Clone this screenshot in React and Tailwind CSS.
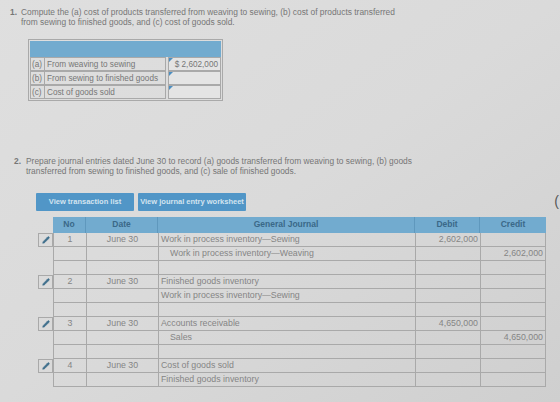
import { Pencil } from "lucide-react";

const font = { fontFamily: '"Liberation Sans", Arial, sans-serif' };

const parts = [
  { key: "(a)", label: "From weaving to sewing", value: "$ 2,602,000" },
  { key: "(b)", label: "From sewing to finished goods", value: "" },
  { key: "(c)", label: "Cost of goods sold", value: "" },
];

const journal = [
  [
    { no: "1", date: "June 30", account: "Work in process inventory\u2014Sewing", debit: "2,602,000" },
    { account: "Work in process inventory\u2014Weaving", indent: true, credit: "2,602,000" },
    {},
  ],
  [
    { no: "2", date: "June 30", account: "Finished goods inventory" },
    { account: "Work in process inventory\u2014Sewing" },
    {},
  ],
  [
    { no: "3", date: "June 30", account: "Accounts receivable", debit: "4,650,000" },
    { account: "Sales", indent: true, credit: "4,650,000" },
    {},
  ],
  [
    { no: "4", date: "June 30", account: "Cost of goods sold" },
    { account: "Finished goods inventory" },
  ],
];

const cols = "grid grid-cols-[15px_33px_72px_257px_65px_66px]";

function JournalRow({ row, first }) {
  return (
    <div className={`${cols} h-[14px] text-[8.8px] leading-[13px] text-[#858585]`}>
      {first ? (
        <div className="border border-[#a9a9a9] flex items-center justify-center">
          <Pencil size={8} className="text-[#3f6f8c]" fill="#3f6f8c" strokeWidth={1.5} />
        </div>
      ) : (
        <div />
      )}
      <div className="border-l border-b border-[#a9a9a9] text-center">{row.no}</div>
      <div className="border-l border-b border-[#a9a9a9] text-center">{row.date}</div>
      <div className={`border-l border-b border-[#a9a9a9] ${row.indent ? "pl-[11px]" : "pl-[2px]"}`}>
        {row.account}
      </div>
      <div className="border-l border-b border-[#a9a9a9] text-right pr-[2px]">{row.debit}</div>
      <div className="border-l border-r border-b border-[#a9a9a9] text-right pr-[2px]">{row.credit}</div>
    </div>
  );
}

export default function App() {
  return (
    <div
      style={font}
      className="relative w-[560px] h-[402px] overflow-hidden bg-gradient-to-br from-[#dfdfdf] via-[#dadada] to-[#cfcfcf] text-[#767676]"
    >
      <div className="pt-[7px] pl-[10px] flex text-[8.4px] leading-[10px]">
        <span className="w-[11px] font-bold">1.</span>
        <p className="w-[382px]">
          Compute the (a) cost of products transferred from weaving to sewing, (b) cost of products transferred
          from sewing to finished goods, and (c) cost of goods sold.
        </p>
      </div>

      <div className="ml-[28px] mt-[12px] w-[195px] border border-[#a9a9a9] p-[1px] text-[8.2px] leading-[13px]">
        <div className="h-[16px] bg-[#72abcf]" />
        {parts.map((p) => (
          <div key={p.key} className="flex h-[14px]">
            <div className="w-[15px] border border-[#a9a9a9] pl-[1px]">{p.key}</div>
            <div className="w-[121px] border-y border-r border-[#a9a9a9] pl-[2px]">{p.label}</div>
            <div className="relative ml-[2px] flex-1 border border-[#a9a9a9] bg-[#e4e4e4] text-right pr-[2px]">
              <span className="absolute left-0 top-0 w-0 h-0 border-t-[4px] border-r-[4px] border-t-[#4d8fc2] border-r-transparent" />
              {p.value}
            </div>
          </div>
        ))}
      </div>

      <div className="mt-[55px] pl-[14px] flex text-[8.4px] leading-[10px]">
        <span className="w-[12px] font-bold">2.</span>
        <p className="w-[394px]">
          Prepare journal entries dated June 30 to record (a) goods transferred from weaving to sewing, (b) goods
          transferred from sewing to finished goods, and (c) sale of finished goods.
        </p>
      </div>

      <div className="mt-[17px] ml-[36px] flex gap-[4px] text-[7.5px] font-bold text-[#d3e4f0]">
        <button className="w-[98px] h-[18px] bg-[#5196c7] rounded-[1px]">View transaction list</button>
        <button className="w-[108px] h-[18px] bg-[#5196c7] rounded-[1px]">View journal entry worksheet</button>
      </div>

      <div className="mt-[6px] ml-[38px] w-[508px]">
        <div className={`${cols} h-[16px] text-[8.5px] leading-[15px] font-semibold text-[#3a6888]`}>
          <div />
          <div className="bg-[#72abcf] border-r border-[#5f98bd] text-center">No</div>
          <div className="bg-[#72abcf] border-r border-[#5f98bd] text-center">Date</div>
          <div className="bg-[#72abcf] border-r border-[#5f98bd] text-center">General Journal</div>
          <div className="bg-[#72abcf] border-r border-[#5f98bd] text-center">Debit</div>
          <div className="bg-[#72abcf] text-center">Credit</div>
        </div>
        {journal.map((entry, i) =>
          entry.map((row, j) => <JournalRow key={`${i}-${j}`} row={row} first={j === 0} />)
        )}
      </div>

      <span className="absolute right-[1px] top-[193px] text-[14px] leading-[16px] text-[#555]">(</span>
    </div>
  );
}
